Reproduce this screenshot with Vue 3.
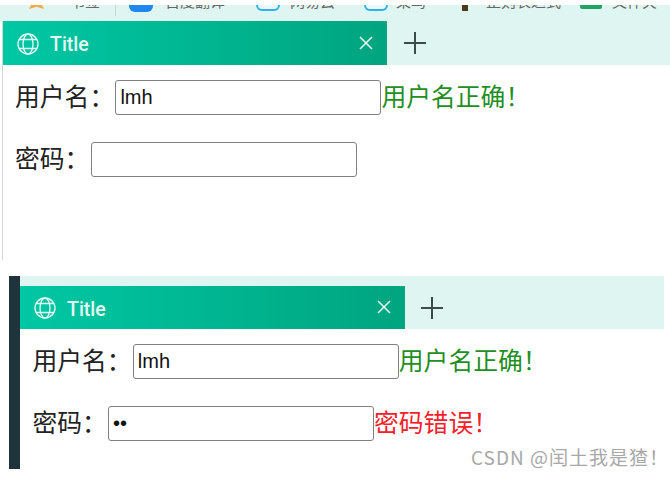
<script setup>
const panels = [
  { id: 'a', pwd: '', pwdMsg: '' },
  { id: 'b', pwd: 'ab', pwdMsg: '密码错误！' }
]
</script>

<template>
  <div class="page">
    <div class="bookmarks">
      <svg class="bm-star" width="17" height="4" viewBox="0 0 17 4"><path d="M3 0L1 4 8.5 1.8 16 4 14 0z" fill="#f5a94a"/></svg>
      <span class="bm-text">书签</span>
      <i class="bm-sep"></i>
      <i class="bm-ico blue"></i><span class="bm-text">百度翻译</span>
      <i class="bm-ico cyan"></i><span class="bm-text">网易云</span>
      <i class="bm-ico cyan"></i><span class="bm-text">菜鸟</span>
      <i class="bm-pin"></i><span class="bm-text">正则表达式</span>
      <i class="bm-ico green"></i><span class="bm-text">文件夹</span>
    </div>

    <section v-for="p in panels" :key="p.id" class="panel" :class="'panel-' + p.id">
      <div class="strip">
        <div class="tab">
          <svg class="globe" width="22" height="22" viewBox="0 0 22 22" fill="none" stroke="#e9fbf6" stroke-width="1.3">
            <circle cx="11" cy="11" r="10"/>
            <ellipse cx="11" cy="11" rx="5" ry="10"/>
            <path d="M2 6.5h18M2 15.5h18"/>
          </svg>
          <span class="tab-title">Title</span>
          <svg class="close" width="14" height="14" viewBox="0 0 14 14" stroke="#e9fbf6" stroke-width="1.5"><path d="M1 1l12 12M13 1L1 13"/></svg>
        </div>
        <svg class="plus" width="22" height="22" viewBox="0 0 22 22" stroke="#3c4a48" stroke-width="2"><path d="M11 0v22M0 11h22"/></svg>
      </div>
      <div class="form">
        <div class="row">
          <label class="lbl">用户名：</label>
          <input class="field" type="text" value="lmh" />
          <span class="msg ok">用户名正确！</span>
        </div>
        <div class="row">
          <label class="lbl">密码：</label>
          <input class="field" type="password" :value="p.pwd" />
          <span v-if="p.pwdMsg" class="msg bad">{{ p.pwdMsg }}</span>
        </div>
      </div>
    </section>

    <div class="mark">CSDN @闰土我是猹！</div>
  </div>
</template>

<style>
html, body { margin: 0; background: #fff; }
</style>

<style scoped>
.page {
  position: relative;
  width: 670px;
  height: 478px;
  overflow: hidden;
  background: #fff;
  font-family: "Noto Sans CJK SC", "Liberation Sans", sans-serif;
  color: #222;
}
.bookmarks {
  box-sizing: border-box;
  height: 16px;
  margin-top: 5px;
  background: #dff5f1;
  display: grid;
  grid-template-columns: 48px 45px 14px 36px 91px 34px 74px 32px 66px 24px 94px 32px 1fr;
  align-items: start;
  overflow: hidden;
  padding-left: 22px;
  font-size: 15px;
  color: #666;
}
.bm-star { display: block; margin-left: 6px; }
.bm-text {
  display: block;
  margin-top: -12px;
  line-height: 15px;
  white-space: nowrap;
}
.bm-sep { width: 1px; height: 11px; background: #c8d4d2; }
.bm-ico { width: 24px; height: 6px; border-radius: 0 0 6px 6px; }
.blue { background: #1e88f0; height: 7px; }
.cyan { box-sizing: border-box; height: 6px; background: #eaf8fb; border: 2px solid #2db3ea; border-top: 0; }
.green { background: #1fa463; height: 4px; width: 22px; border-radius: 0 0 2px 2px; }
.bm-pin { width: 6px; height: 6px; background: #4a3a20; }

.panel { display: flex; flex-direction: column; }
.panel-a { height: 239px; margin-left: 2px; border-left: 1px solid #d4d4d4; }
.panel-b {
  margin: 16px 6px 0 9px;
  height: 193px;
  border-left: 11px solid #1f333b;
}
.strip {
  display: flex;
  align-items: center;
  height: 44px;
  background: #dff5f1;
  flex: none;
}
.panel-b .strip { height: 53px; align-items: flex-end; }
.tab {
  box-sizing: border-box;
  width: 384px;
  height: 44px;
  display: flex;
  align-items: center;
  padding: 1px 14px 0;
  background: linear-gradient(90deg, #00c7a4, #00a57f);
  color: #e4f8f2;
  flex: none;
}
.panel-b .tab { width: 385px; height: 43px; }
.globe { flex: none; }
.tab-title {
  flex: 1;
  margin-left: 11px;
  padding-top: 2px;
  font: 500 19.5px Roboto, "Liberation Sans", sans-serif;
}
.close { flex: none; margin-top: -2px; }
.plus { margin-left: 17px; flex: none; }
.panel-b .plus { margin-left: 16px; margin-bottom: 10px; }

.form { display: flex; flex-direction: column; gap: 27px; padding: 15px 0 0 13px; }
.panel-b .form { padding-left: 13.4px; }
.row { display: flex; align-items: center; height: 35px; white-space: nowrap; font-size: 24.8px; }
.lbl { margin: -6px 1.2px 0 -1px; }
.field {
  box-sizing: border-box;
  width: 266px;
  height: 35px;
  margin: 0;
  padding: 0 4px;
  border: 1px solid #808080;
  border-radius: 3px;
  font: 20px "Liberation Sans", Arial, sans-serif;
  color: #111;
  background: #fff;
  outline: none;
}
.msg { margin-top: -5px; }
.ok { color: #1f8f1f; }
.bad { color: #f5202a; }
.mark {
  position: absolute;
  left: 471px;
  top: 444px;
  font-size: 19px;
  line-height: 26px;
  letter-spacing: 1px;
  color: #a8a8a8;
  white-space: nowrap;
}
</style>
